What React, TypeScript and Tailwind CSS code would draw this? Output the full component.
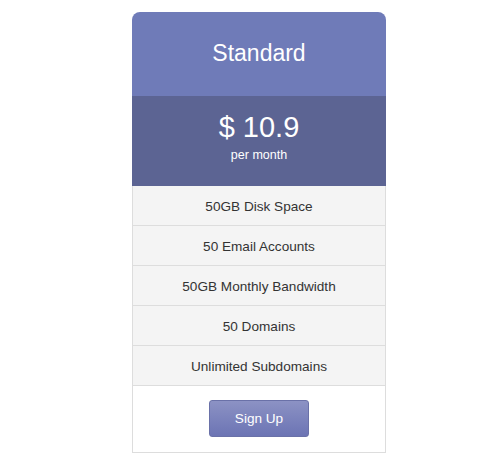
const features = [
  '50GB Disk Space',
  '50 Email Accounts',
  '50GB Monthly Bandwidth',
  '50 Domains',
  'Unlimited Subdomains',
]

export default function App() {
  return (
    <div
      className="flex min-h-[472px] justify-center bg-white pt-3 pl-[18px]"
      style={{ fontFamily: '"Liberation Sans", Arial, sans-serif' }}
    >
      <div className="w-[254px]">
        <div className="flex h-[84px] items-center justify-center rounded-t-lg bg-[#6f7bb8] pb-[2px] text-[23px] text-white">
          Standard
        </div>
        <div className="flex h-[90px] flex-col items-center bg-[#5c6493] pt-[14px] text-white">
          <div className="text-[29px] leading-[35px]">$ 10.9</div>
          <div className="mt-[2px] text-[12.5px] leading-4">per month</div>
        </div>
        <ul className="border-x border-[#dddddd] bg-[#f4f4f4]">
          {features.map((f) => (
            <li
              key={f}
              className="flex h-10 items-center justify-center border-b border-[#dddddd] pt-[3px] text-[13.6px] text-[#333333]"
            >
              {f}
            </li>
          ))}
        </ul>
        <div className="flex justify-center border-x border-b border-[#dddddd] bg-white pt-[14px] pb-[15px]">
          <button className="h-[37px] w-[100px] rounded-[3px] border border-[#6a71a8] bg-gradient-to-b from-[#8c92c4] to-[#6c74b4] pt-[2px] text-[13.6px] text-white">
            Sign Up
          </button>
        </div>
      </div>
    </div>
  )
}
